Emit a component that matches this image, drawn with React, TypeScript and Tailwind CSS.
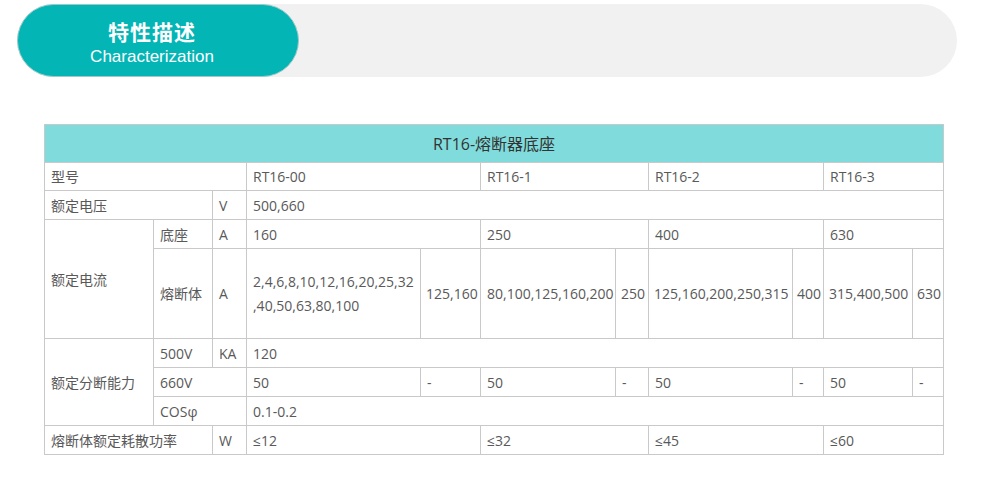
import React from "react";

const cell = "border border-[#c9c9c9] px-[6px] align-middle text-left font-normal";

export default function App() {
  return (
    <div className="w-[990px] h-[496px] bg-white font-['Open_Sans','Noto_Sans_CJK_SC',sans-serif] text-[14px] text-[#595959]">
      {/* section title bar */}
      <div className="pt-[4px] pl-[17px] pr-[33px]">
        <div className="h-[73px] rounded-full bg-[#f1f1f1] flex">
          <div className="w-[282px] h-[73px] rounded-full bg-[#03b5b5] border border-[#9fc9c9] flex flex-col items-center justify-center gap-[6px] pt-[5px] pr-[12px] text-white">
            <div className="text-[21px] font-bold leading-[21px] tracking-[1px] font-['Noto_Sans_CJK_SC',sans-serif]">特性描述</div>
            <div className="text-[17px] leading-[18px] font-['Liberation_Sans',sans-serif] font-light">Characterization</div>
          </div>
        </div>
      </div>

      {/* spec table */}
      <div className="pl-[44px] pt-[47px]">
        <table className="table-fixed border-collapse w-[900px]">
          <colgroup>
            <col className="w-[109px]" />
            <col className="w-[59px]" />
            <col className="w-[34px]" />
            <col className="w-[174px]" />
            <col className="w-[60px]" />
            <col className="w-[135px]" />
            <col className="w-[33px]" />
            <col className="w-[144px]" />
            <col className="w-[31px]" />
            <col className="w-[89px]" />
            <col className="w-[31px]" />
          </colgroup>
          <tbody>
            <tr className="h-[38px] bg-[#80dcdc]">
              <td colSpan={11} className="border border-[#c9c9c9] text-center text-[16px] text-[#333]">RT16-熔断器底座</td>
            </tr>
            <tr className="h-[28px]">
              <td colSpan={3} className={cell}>型号</td>
              <td colSpan={2} className={cell}>RT16-00</td>
              <td colSpan={2} className={cell}>RT16-1</td>
              <td colSpan={2} className={cell}>RT16-2</td>
              <td colSpan={2} className={cell}>RT16-3</td>
            </tr>
            <tr className="h-[29px]">
              <td colSpan={2} className={cell}>额定电压</td>
              <td className={cell}>V</td>
              <td colSpan={8} className={cell}>500,660</td>
            </tr>
            <tr className="h-[29px]">
              <td rowSpan={2} className={cell}>额定电流</td>
              <td className={cell}>底座</td>
              <td className={cell}>A</td>
              <td colSpan={2} className={cell}>160</td>
              <td colSpan={2} className={cell}>250</td>
              <td colSpan={2} className={cell}>400</td>
              <td colSpan={2} className={cell}>630</td>
            </tr>
            <tr className="h-[90px]">
              <td className={cell}>熔断体</td>
              <td className={cell}>A</td>
              <td className={cell + " leading-[24px]"}>
                2,4,6,8,10,12,16,20,25,32
                <br />
                ,40,50,63,80,100
              </td>
              <td className={cell + " !px-[5px]"}>125,160</td>
              <td className={cell}>80,100,125,160,200</td>
              <td className={cell + " !px-[5px]"}>250</td>
              <td className={cell + " !px-[5px] whitespace-nowrap"}>125,160,200,250,315</td>
              <td className={cell + " !px-[4px]"}>400</td>
              <td className={cell + " !px-[5px] whitespace-nowrap"}>315,400,500</td>
              <td className={cell + " !px-[4px]"}>630</td>
            </tr>
            <tr className="h-[29px]">
              <td rowSpan={3} className={cell}>额定分断能力</td>
              <td className={cell}>500V</td>
              <td className={cell}>KA</td>
              <td colSpan={8} className={cell}>120</td>
            </tr>
            <tr className="h-[29px]">
              <td colSpan={2} className={cell}>660V</td>
              <td className={cell}>50</td>
              <td className={cell}>-</td>
              <td className={cell}>50</td>
              <td className={cell}>-</td>
              <td className={cell}>50</td>
              <td className={cell}>-</td>
              <td className={cell}>50</td>
              <td className={cell}>-</td>
            </tr>
            <tr className="h-[29px]">
              <td colSpan={2} className={cell}>COSφ</td>
              <td colSpan={8} className={cell}>0.1-0.2</td>
            </tr>
            <tr className="h-[29px]">
              <td colSpan={2} className={cell}>熔断体额定耗散功率</td>
              <td className={cell}>W</td>
              <td colSpan={2} className={cell}>≤12</td>
              <td colSpan={2} className={cell}>≤32</td>
              <td colSpan={2} className={cell}>≤45</td>
              <td colSpan={2} className={cell}>≤60</td>
            </tr>
          </tbody>
        </table>
      </div>
    </div>
  );
}
